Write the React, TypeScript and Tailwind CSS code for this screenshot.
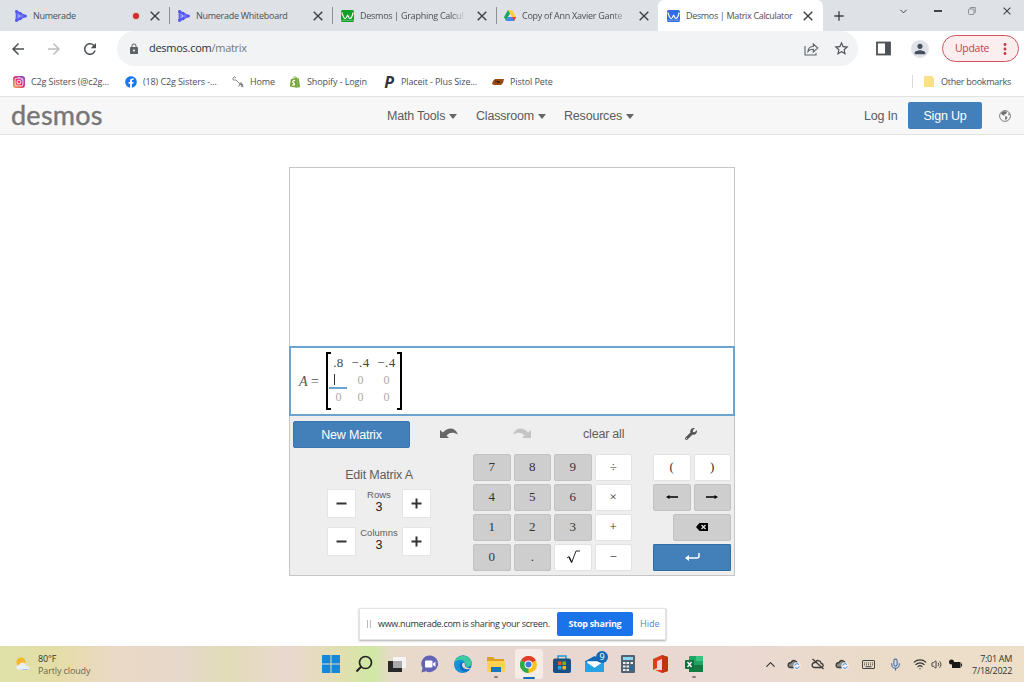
import type { ReactNode } from "react"
import { MdArrowBack, MdArrowForward, MdRefresh, MdLock, MdStarBorder, MdPerson, MdAdd, MdMoreVert } from "react-icons/md"
import { FaWrench, FaFacebook, FaInstagram, FaShopify } from "react-icons/fa"
import { ChevronDown, ChevronUp, Mic, Wifi, Volume2 } from "lucide-react"

const Cross = ({ s = 10, w = 1.4 }: { s?: number, w?: number }) => (
    <svg width={s} height={s} viewBox="0 0 10 10" stroke="#3c4043" strokeWidth={w} className="shrink-0">
        <path d="M.7.7l8.6 8.6M9.3.7L.7 9.3" />
    </svg>
)

const NumeradeIcon = () => (
    <svg width="12" height="12" viewBox="0 0 12 12" className="shrink-0">
        <path d="M1.500 1.500v9L10.500 6z" stroke="#5f64f2" strokeWidth="1.800" fill="#7b80f6" />
        <path d="M3 4l2 2-2 2" stroke="#dee1e6" strokeWidth=".7" fill="none" />
        {[[1.7, 1.6], [1.7, 10.2], [5, 3.3], [5, 8.7], [10.2, 6]].map(([x, y]) =>
            <circle key={`${x}-${y}`} cx={x} cy={y} r="1.6" fill="#5257ee" />
        )}
    </svg>
)

const DesmosIcon = ({ color }: { color: string }) => (
    <svg width="13" height="12" viewBox="0 0 13 12" className="shrink-0">
        <rect width="13" height="12" rx="1.5" fill={color} />
        <path d="M.8 2.500C2 6 2.700 8.500 4.300 8.500S6 5 6.600 5s1 3.500 2.300 3.500S11.300 6 12.200 2.500" stroke="#fff" strokeWidth="1.200" fill="none" />
        <path d="M0 10.200h13" stroke="#fff" strokeWidth=".6" opacity=".6" />
    </svg>
)

const DriveIcon = () => (
    <svg width="12" height="11" viewBox="0 0 12 11" className="shrink-0">
        <path d="M4 0h4l-4 7-2 4-2-4z" fill="#1da362" />
        <path d="M4 0h4l4 7H8z" fill="#ffcf3f" />
        <path d="M2 11l2-4h8l-2 4z" fill="#4285f4" />
        <path d="M8 7h4l-2 4z" fill="#ea4335" />
    </svg>
)

const Tab = ({ icon, title, recording, last }: { icon: ReactNode, title: string, recording?: boolean, last?: boolean }) => (
    <div className="flex h-full w-[163px] shrink-0 items-center">
        {icon}
        <span className={`ml-[6px] w-[108px] shrink-0 whitespace-nowrap tracking-[-0.27px] ${title.length > 20 ? "[mask-image:linear-gradient(to_right,black_84%,transparent_98%)]" : ""}`}>{title}</span>
        <span className="-ml-[10px] flex w-[10px] justify-center">{recording && <i className="h-[6px] w-[6px] rounded-full bg-[#d42b33] shadow-[0_0_2px_#e88]" />}</span>
        <span className="ml-[9px] flex"><Cross /></span>
        {!last && <span className="ml-[9px] h-[17px] w-px bg-[#8d9196]" />}
    </div>
)

const Bookmark = ({ icon, title, width }: { icon: ReactNode, title: string, width: string }) => (
    <div className={`flex shrink-0 items-center whitespace-nowrap tracking-[-0.11px] ${width}`}>
        <span className="mr-[5px] flex w-[14px] justify-center">{icon}</span>{title}
    </div>
)

const Browser = () => (
    <header className="font-['Open_Sans',sans-serif] text-[9px] text-[#4b4f54]">
        <div className="flex h-[31px] items-center bg-[#dee1e6] pl-[15px]">
            <Tab icon={<NumeradeIcon />} title="Numerade" recording />
            <Tab icon={<NumeradeIcon />} title="Numerade Whiteboard" />
            <Tab icon={<DesmosIcon color="#12a02a" />} title="Desmos | Graphing Calcul" />
            <Tab icon={<DriveIcon />} title="Copy of Ann Xavier Gante" last />
            <div className="-ml-[9px] flex h-full w-[165px] shrink-0 items-center rounded-t-[6px] bg-white pl-[9px]">
                <DesmosIcon color="#2f6fe0" />
                <span className="ml-[6px] w-[109px] whitespace-nowrap tracking-[-0.34px]">Desmos | Matrix Calculator</span>
                <span className="ml-[8px] flex"><Cross /></span>
            </div>
            <MdAdd className="ml-[8px] text-[#3c4043]" size={16} />
            <ChevronDown className="mb-[9px] ml-[51px] text-[#333]" size={11} />
            <span className="mb-[9px] ml-[25px] h-[1.500px] w-[8px] bg-[#444]" />
            <svg className="mb-[9px] ml-[26px]" width="8" height="8" viewBox="0 0 8 8" fill="none" stroke="#85898d" strokeWidth=".9">
                <rect x=".5" y="2" width="5.500" height="5.500" rx="1" /><path d="M2.300 1.700V.5h5v5H6.300" />
            </svg>
            <span className="mb-[9px] ml-[27px]"><Cross s={8} w={1.3} /></span>
        </div>

        <div className="flex h-[35px] items-center bg-white">
            <MdArrowBack className="ml-[9px] text-[#4d5156]" size={18} />
            <MdArrowForward className="ml-[18px] text-[#babcbe]" size={18} />
            <MdRefresh className="ml-[18px] text-[#4d5156]" size={18} />
            <div className="ml-[18px] flex h-[35px] w-[741px] shrink-0 items-center rounded-full bg-[#f1f3f4] pl-[11px]">
                <MdLock className="text-[#5f6368]" size={12} />
                <span className="ml-[9px] w-[674px] text-[11px] tracking-[-0.27px] text-[#77797c]"><span className="text-[#2e3134]">desmos.com</span>/matrix</span>
                <svg className="-ml-[19px] shrink-0" width="15" height="14" viewBox="0 0 15 14" fill="none" stroke="#5f6368" strokeWidth="1.1">
                    <path d="M1 4v9h11V11M4 9.500c.2-3.500 2-5 5.300-5V2l4.500 4-4.500 4V7.300C6.500 7.300 5 8 4 9.500z" />
                </svg>
                <MdStarBorder className="ml-[14px] shrink-0 text-[#4d5156]" size={17} />
            </div>
            <svg className="ml-[18px]" width="15" height="15" viewBox="0 0 15 15">
                <rect x="1" y="1.500" width="13" height="12" fill="none" stroke="#4d5156" strokeWidth="1.800" /><path d="M9 1h5v13H9z" fill="#4d5156" />
            </svg>
            <span className="ml-[20px] flex h-[18px] w-[18px] items-center justify-center rounded-full bg-[#dfe3e9] text-[#454e5b]"><MdPerson size={16} /></span>
            <div className="ml-[13px] flex h-[27px] w-[77px] items-center rounded-full border border-[#cf525a] bg-[#fceeee] pl-[12px] text-[#c8404a]">
                <span className="w-[38px] text-[10.500px] tracking-[-0.3px]">Update</span><MdMoreVert className="ml-[3px]" size={18} />
            </div>
        </div>

        <div className="flex h-[31px] items-center border-b border-[#e2e2e2] bg-white pt-px pl-[12px]">
            <Bookmark width="w-[112px]" title="C2g Sisters (@c2g..." icon={<span className="flex h-[12px] w-[12px] items-center justify-center rounded-[3px] bg-linear-to-tr from-[#f9a43a] via-[#e1306c] to-[#7b38d8] text-white"><FaInstagram size={10} /></span>} />
            <Bookmark width="w-[107px]" title="(18) C2g Sisters -..." icon={<FaFacebook size={12} color="#1877f2" />} />
            <Bookmark width="w-[57px]" title="Home" icon={
                <svg width="12" height="12" viewBox="0 0 12 12" fill="none" stroke="#777" strokeWidth=".9">
                    <path d="M4 2Q2-.5 1 2t3 2M4 4l4 4M6.500 10.500l2.500-4 1 4.500M7.500 9l3-1q1 2-1 2l2 1" />
                </svg>
            } />
            <Bookmark width="w-[94px]" title="Shopify - Login" icon={<FaShopify size={12} color="#74a536" />} />
            <Bookmark width="w-[109px]" title="Placeit - Plus Size..." icon={<b className="text-[16px] leading-none text-[#333] italic">P</b>} />
            <Bookmark width="w-[100px]" title="Pistol Pete" icon={<svg width="12" height="6" viewBox="0 0 12 6"><path d="M3 0h9l-1 4-2 2H2L0 5l1-3z" fill="#9c4a14" /><path d="M3 2l5 1-3 1" stroke="#4b2008" fill="none" /></svg>} />
            <span className="ml-[321px] h-[13px] w-px bg-[#d8dadd]" />
            <svg className="ml-[11px]" width="10" height="11"><path d="M0 0h9v2h1v9H0z" fill="#fbe08a" /></svg>
            <span className="ml-[7px] tracking-[-0.26px] whitespace-nowrap">Other bookmarks</span>
        </div>
    </header>
)

const NavItem = ({ title, width }: { title: string, width: string }) => (
    <a className={`flex items-center whitespace-nowrap ${width}`}>
        {title}
        <svg className="ml-[4px]" width="8" height="5" viewBox="0 0 8 5"><path d="M0 0h8L4 5z" fill="#666" /></svg>
    </a>
)

const SiteHeader = () => (
    <nav className="flex h-[38px] items-center border-b border-[#e2e2e2] bg-[#f7f7f7] pl-[11px] text-[12.500px] tracking-[-0.2px] text-[#5c5c5c]">
        <span className="mb-[3px] w-[376px] font-['Lato',sans-serif] text-[27px] leading-none tracking-[0.25px] text-[#767676] [-webkit-text-stroke:0.4px_#767676]">desmos</span>
        <div className="flex pt-[2px]">
            <NavItem title="Math Tools" width="w-[89px]" />
            <NavItem title="Classroom" width="w-[88px]" />
            <NavItem title="Resources" width="w-[300px]" />
            <span className="w-[44px]">Log In</span>
        </div>
        <button className="h-[27px] w-[74px] rounded-[2px] bg-[#437fb9] pt-px text-white">Sign Up</button>
        <svg className="ml-[17px]" width="12" height="12" viewBox="0 0 12 12">
            <circle cx="6" cy="6" r="5.400" fill="none" stroke="#707070" strokeWidth=".9" />
            <path d="M3 2l3-1 2 1-1 2-2 .5.500 1.500L3.500 5 2 3.500zM6.500 6l2 1-1.500 3.500-1-2zM9.500 3l1.300 2-1.600.2z" fill="#707070" />
        </svg>
    </nav>
)

const matrix = [[".8", "−.4", "−.4"], ["", "0", "0"], ["0", "0", "0"]]

const Matrix = () => (
    <div className="flex h-[70px] items-center border-2 border-[#6da3cf] bg-white pl-[8px] font-['Liberation_Serif',serif] text-[#555]">
        <span className="w-[27px] text-[14px] whitespace-nowrap"><i>A</i> =</span>
        <svg width="5" height="58" viewBox="0 0 5 58"><path d="M5 1H1v56h4" fill="none" stroke="#000" strokeWidth="2" /></svg>
        <div className="mb-[2px] grid h-[52px] w-[67px] grid-cols-[15px_29px_23px] grid-rows-[18px_17px_17px] text-center text-[12px] leading-[17px]">
            {matrix.map((row, r) => row.map((cell, c) => cell === ""
                ? <span key={`${r}${c}`} className="-mr-px -ml-[2px] flex items-center border-b-2 border-[#6da3cf] pl-[5px]"><i className="h-[11px] w-px bg-[#333]" /></span>
                : <span key={`${r}${c}`} className={r === 0 ? "text-[13px] tracking-[0.4px] whitespace-nowrap text-[#444]" : "text-[#aaa]"}>{cell}</span>
            ))}
        </div>
        <svg className="ml-[-1px]" width="5" height="58" viewBox="0 0 5 58"><path d="M0 1h4v56H0" fill="none" stroke="#000" strokeWidth="2" /></svg>
    </div>
)

const Undo = ({ color, flip }: { color: string, flip?: boolean }) => (
    <svg width="18" height="11" viewBox="0 0 18 11" className={flip ? "-scale-x-100" : ""}>
        <path d="M0 2v8h9L6.500 7.500C9 4.500 13 3.500 18 6.500 15-1 8-1 3 4.500z" fill={color} />
    </svg>
)

const StepButton = ({ plus }: { plus?: boolean }) => (
    <button className="flex h-[29px] w-[29px] items-center justify-center border border-[#e4e4e4] bg-white">
        <svg width="11" height="11" viewBox="0 0 11 11"><path d={plus ? "M.5 5.500h10M5.500.5v10" : "M.5 5.500h10"} stroke="#333" strokeWidth="2" /></svg>
    </button>
)

const Stepper = ({ label, value }: { label: string, value: number }) => (
    <div className="flex h-[29px] w-[104px] items-center justify-between">
        <StepButton />
        <div className="-mx-2 flex h-full flex-col items-center text-[9.500px] leading-[11px] tracking-normal">
            {label}
            <span className="text-[12.500px] leading-[14px] text-[#222]">{value}</span>
        </div>
        <StepButton plus />
    </div>
)

const Arrow = ({ flip }: { flip?: boolean }) => (
    <svg width="12" height="6" viewBox="0 0 12 6" className={flip ? "-scale-x-100" : ""}><path d="M0 3l3.500-2v1.200H12v1.600H3.500V5z" fill="#000" /></svg>
)

const Key = ({ children, light }: { children: ReactNode, light?: boolean }) => (
    <button className={`flex items-center justify-center rounded-[2px] border pb-[2px] ${light ? "border-[#e2e2e2] bg-white" : "border-[#c2c2c2] bg-[#cecece]"}`}>{children}</button>
)

const keys = ["7", "8", "9", "÷", "4", "5", "6", "×", "1", "2", "3", "+", "0", ".", "√", "−"]

const Keypad = () => (
    <div className="flex font-['Liberation_Serif',serif] text-[13px] tracking-normal text-[#333]">
        <div className="grid h-[117px] w-[159px] grid-cols-4 grid-rows-4 gap-[3px]">
            {keys.map(k =>
                <Key key={k} light={"÷×+√−".includes(k)}>
                    {k === "√"
                        ? <svg width="14" height="14" viewBox="0 0 14 14" fill="none" stroke="#111"><path d="M1 8l2-1.500" strokeWidth=".8" /><path d="M3 6.800L5.500 12" strokeWidth="1.500" /><path d="M5.500 13L10 1h4" strokeWidth=".9" /></svg>
                        : k}
                </Key>
            )}
        </div>
        <div className="ml-[21px] grid h-[117px] w-[78px] grid-cols-4 grid-rows-4 gap-[3px] *:col-span-2">
            <Key light>(</Key>
            <Key light>)</Key>
            <Key><Arrow /></Key>
            <Key><Arrow flip /></Key>
            <div className="col-start-2! col-end-5! grid">
                <Key><svg width="12" height="8" viewBox="0 0 12 8"><path d="M3.500 0H12v8H3.500L0 4z" fill="#000" /><path d="M5.500 2l4 4m0-4l-4 4" stroke="#ddd" strokeWidth="1.400" /></svg></Key>
            </div>
            <button className="col-span-4! flex items-center justify-center rounded-[1px] border border-[#346da3] bg-[#437fb9]">
                <svg width="15" height="9" viewBox="0 0 15 9"><path d="M14 0v3q0 2-2 2H3" fill="none" stroke="#fff" strokeWidth="1.500" /><path d="M4 2v6L0 5z" fill="#fff" /></svg>
            </button>
        </div>
    </div>
)

const Calculator = () => (
    <section className="mt-[32px] ml-[289px] h-[409px] w-[446px] border border-[#c6c6c6] bg-[#eee] text-[12.500px] tracking-[-0.2px] text-[#5e5e5e]">
        <div className="h-[178px] bg-white" />
        <div className="-mx-px tracking-normal"><Matrix /></div>
        <div className="flex h-[37px] items-center pl-[3px]">
            <button className="h-[27px] w-[117px] rounded-[2px] border border-[#3a76ae] bg-[#437fb9] pt-px text-white">New Matrix</button>
            <span className="mb-[2px] ml-[30px]"><Undo color="#666" /></span>
            <span className="mb-[2px] ml-[55px]"><Undo color="#c4c4c4" flip /></span>
            <span className="ml-[52px] w-[102px]">clear all</span>
            <FaWrench className="mb-[2px] text-[#555]" size={12} />
        </div>
        <div className="flex pt-px">
            <div className="flex w-[183px] flex-col items-center pt-[12px] pr-[5px]">
                <span className="leading-[18px]">Edit Matrix A</span>
                <span className="mt-[5px]"><Stepper label="Rows" value={3} /></span>
                <span className="mt-[9px]"><Stepper label="Columns" value={3} /></span>
            </div>
            <Keypad />
        </div>
    </section>
)

const ShareBar = () => (
    <div className="mt-[32px] ml-[359px] flex h-[32px] w-[307px] items-center border border-[#e3e3e3] bg-white pl-[7px] font-['Open_Sans',sans-serif] text-[9px] tracking-[-0.28px] text-[#333] shadow-[0_1px_2px_#aaa]">
        <span className="h-[8px] w-[4px] border-x border-[#bbb]" />
        <span className="ml-[7px] w-[179px] tracking-[-0.3px] whitespace-nowrap">www.numerade.com is sharing your screen.</span>
        <button className="h-[24px] w-[76px] rounded-[2px] bg-[#1a73e8] font-bold text-white">Stop sharing</button>
        <span className="ml-[7px] tracking-normal text-[#4a86d8]">Hide</span>
    </div>
)

const apps = [
    // start
    <svg width="18" height="18" viewBox="0 0 18 18"><path d="M0 0h8.500v8.500H0zM9.500 0H18v8.500H9.500zM0 9.500h8.500V18H0zM9.500 9.500H18V18H9.500z" fill="#1687d9" /></svg>,
    // search
    <svg width="18" height="18" viewBox="0 0 18 18" fill="none" stroke="#222" strokeWidth="1.700"><circle cx="10.500" cy="7.500" r="6" /><path d="M6.300 11.500L1.500 16.500" strokeWidth="2" /></svg>,
    // task view
    <svg width="18" height="18" viewBox="0 0 18 18"><path d="M5 2h13v11H5z" fill="#f5f5f5" /><path d="M0 6h14v11H0z" fill="#292929" /><path d="M5 6h9v7H5z" fill="#aaa" /></svg>,
    // chat
    <svg width="18" height="18" viewBox="0 0 18 18"><path d="M9 .5a8.300 8.300 0 11-4 15.700L.5 17.500l1-4.500A8.300 8.300 0 019 .5z" fill="#6264b5" /><rect x="4" y="5.500" width="7.500" height="7" rx="1" fill="#fff" /><path d="M12 8.500L14.500 6.500v5.500L12 10z" fill="#fff" /></svg>,
    // edge
    <svg width="18" height="18" viewBox="0 0 18 18"><circle cx="9" cy="9" r="8.700" fill="#0d6fc2" /><path d="M.5 8C2-2 17-1 17.700 8c0 4-4 4.500-6.700 3.500 2-4-3-8-10.500-3.500z" fill="#3cc8a0" /><path d="M.5 8C3 4 9 4 10.500 7 7 6 4.500 9 6 13c1 3 4 4 7 3.500C6 20-1 15 .5 8z" fill="#1593d8" /><path d="M10.500 7.500c-3 0-3.500 4 0 6 2 1 4 1 6-.5-2 0-5.500-.500-5.500-2z" fill="#e8d8d2" /></svg>,
    // explorer
    <svg width="18" height="18" viewBox="0 0 18 18"><path d="M0 2h6l2 2h9v5H0z" fill="#dfa021" /><path d="M0 6h18v11H0z" fill="#ffd151" /><path d="M4 12h10v5H4z" fill="#1976bd" /></svg>,
    // chrome
    <svg width="17" height="17" viewBox="0 0 18 18"><circle cx="9" cy="9" r="9" fill="#fbc116" /><path d="M9 9L1.200 4.500a9 9 0 0115.600 0z" fill="#e33b2e" /><path d="M9 9l0 9A9 9 0 011.200 4.500z" fill="#2da94f" /><circle cx="9" cy="9" r="4.200" fill="#fff" /><circle cx="9" cy="9" r="3.200" fill="#3978e5" /></svg>,
    // store
    <svg width="18" height="18" viewBox="0 0 18 18"><path d="M5 4V1h8v3" fill="none" stroke="#2595dc" strokeWidth="1.500" /><rect y="3.500" width="18" height="14.500" rx="2" fill="#1b4f82" /><path d="M5 6.500h3.500V10H5z" fill="#f25022" /><path d="M9.500 6.500H13V10H9.500z" fill="#7fba00" /><path d="M5 11h3.500v3.500H5z" fill="#20a8ef" /><path d="M9.500 11H13v3.500H9.500z" fill="#ffb900" /></svg>,
    // mail
    <svg width="19" height="16" viewBox="0 0 18 15"><path d="M0 5l9-5 9 5v10H0z" fill="#1269b5" /><path d="M2 5h14v4l-7 3-7-3z" fill="#fff" /><path d="M0 5l9 6 9-6v10H0z" fill="#28a0e4" /></svg>,
    // calculator
    <svg width="14" height="18" viewBox="0 0 14 18"><rect width="14" height="18" rx="1" fill="#53626d" /><path d="M2 2h10v3H2z" fill="#8cd5f4" /><path d="M2 7h2.500v2H2zM5.500 7H8v2H5.500zM9.500 7H12v2H9.500zM2 10.500h2.500v2H2zM5.500 10.500H8v2H5.500zM2 14h2.500v2H2zM5.500 14H8v2H5.500z" fill="#edf1f4" /><path d="M9.500 10.500H12V16H9.500z" fill="#1d6fb4" /></svg>,
    // office
    <svg width="15" height="18" viewBox="0 0 15 18"><path d="M0 4l9-4 6 2v14l-6 2-7-3h7V4L4 6v7l-4 2z" fill="#dc3d16" /><path d="M9 0l6 2v14l-6 2z" fill="#c23312" /></svg>,
    // excel
    <svg width="18" height="18" viewBox="0 0 18 18"><rect x="4" y="1" width="14" height="16" rx="1" fill="#21a366" /><path d="M11 1h7v5h-7z" fill="#36c481" /><path d="M4 10h14v7H4z" fill="#107c41" /><rect y="5" width="9" height="9" rx="1" fill="#12713d" /><path d="M2.500 7l4 5m0-5l-4 5" stroke="#fff" strokeWidth="1.300" /></svg>,
]

const Cloud = ({ off }: { off?: boolean }) => (
    <svg width="14" height="12" viewBox="0 0 14 12" fill="none">
        <path d="M3.500 9.500h6.700c2.600-.2 2.600-3.700.1-4C9.500 2 5.500 1.500 4 4.500 0 4.500.500 9.500 3.500 9.500z" stroke="#3a3a3a" strokeWidth="1.300" fill={off ? "none" : "#8b8b87"} />
        {off
            ? <path d="M1.500 1l11 10" stroke="#3a3a3a" strokeWidth="1.200" />
            : <><circle cx="10" cy="8" r="3.700" fill="#eef2f7" /><path d="M7.800 7.500a2.300 2.300 0 014-1M12.200 8.500a2.300 2.300 0 01-4 1" stroke="#2b77c9" /></>}
    </svg>
)

const Taskbar = () => (
    <footer className="flex h-[36px] items-center bg-[linear-gradient(90deg,#dde2a9_0px,#e5dda6_55px,#ead9c4_110px,#e6d8cb_180px,#e2dcb8_225px,#ead8cf_290px,#e2dfb0_340px,#d0e8a4_372px,#e8dac9_392px,#e8d7d1_500px,#ead8d2_740px,#eadbc9_860px,#eddfc8_1024px)] pl-[15px] font-['Open_Sans',sans-serif] text-[9px] leading-[12px] tracking-[-0.12px] text-[#333]">
        <svg width="16" height="14" viewBox="0 0 16 14"><circle cx="6" cy="5" r="4.500" fill="#f5b72c" /><path d="M4 13c-4-1-3-5 0-5 2-4 7-3 7 1 5 0 4 4 1 4z" fill="#e9f0f9" /><path d="M4 13q5-1 10-1l-2 1z" fill="#8fb9e9" /></svg>
        <div className="ml-[7px] w-[276px] pt-[2px]">80°F<br /><span className="text-[#6c684f]">Partly cloudy</span></div>
        <div className="flex">
            {apps.map((icon, i) =>
                <div key={i} className="relative flex h-[36px] w-[33px] items-center justify-center">
                    <span className={`flex h-[30px] w-[28px] items-center justify-center rounded-[3px] ${i === 6 ? "bg-[#f5ece8]" : ""}`}>{icon}</span>
                    {(i === 5 || i === 11) && <i className="absolute bottom-[4px] h-[2px] w-[4px] rounded bg-[#858080]" />}
                    {i === 6 && <i className="absolute bottom-[3px] h-[2px] w-[12px] rounded bg-[#156fb8]" />}
                    {i === 8 && <b className="absolute top-[5px] right-[3px] flex h-[12px] w-[12px] items-center justify-center rounded-full bg-[#1269b5] text-[9px] font-normal text-white">9</b>}
                </div>
            )}
        </div>
        <div className="ml-[53px] flex items-center text-[#333]">
            <ChevronUp size={15} strokeWidth={1.8} />
            <span className="ml-[9px]"><Cloud /></span>
            <span className="ml-[10px]"><Cloud off /></span>
            <span className="ml-[10px]"><Cloud /></span>
            <svg className="ml-[13px]" width="13" height="9" viewBox="0 0 13 9" fill="none" stroke="#444">
                <rect x=".5" y=".5" width="12" height="8" rx=".5" /><path d="M2 3h9M2 4.800h9" strokeDasharray="1 1" /><path d="M3.500 6.700h6" />
            </svg>
            <Mic className="ml-[14px] text-[#3f6fae]" size={13} />
            <Wifi className="ml-[11px]" size={14} />
            <Volume2 className="ml-[4px]" size={11} />
            <svg className="ml-[7px]" width="13" height="10" viewBox="0 0 13 10"><path d="M3 3h8.500v6H3zM12 4.500h1v3h-1z" fill="#171717" /><circle cx="2.500" cy="3" r="2.500" fill="#171717" /></svg>
        </div>
        <div className="ml-auto pt-px pr-[12px] text-right tracking-[-0.3px]">7:01 AM<br />7/18/2022</div>
    </footer>
)

export default function App() {
    return (
        <div className="flex h-[682px] w-[1024px] flex-col overflow-hidden bg-white font-['Liberation_Sans',sans-serif]">
            <Browser />
            <SiteHeader />
            <Calculator />
            <ShareBar />
            <div className="mt-auto"><Taskbar /></div>
        </div>
    )
}
